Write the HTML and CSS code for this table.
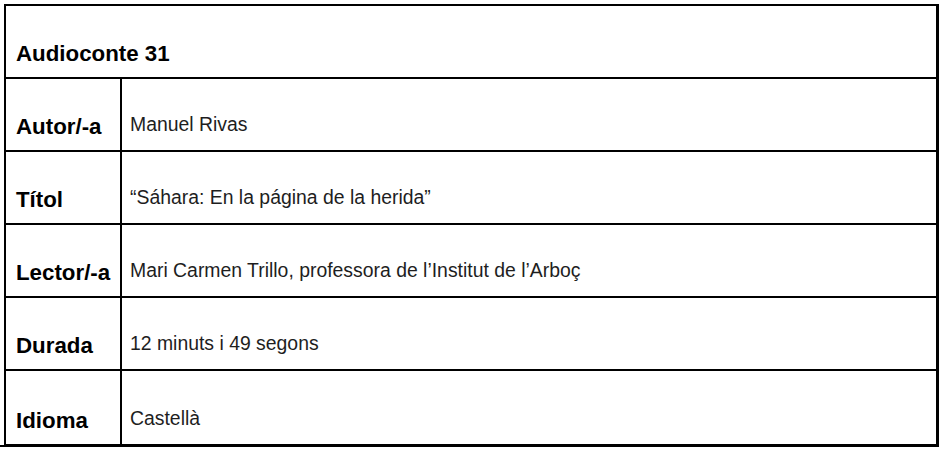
FILE: index.html
```html
<!DOCTYPE html>
<html lang="ca">
<head>
<meta charset="utf-8">
<title>Audioconte 31</title>
<link rel="stylesheet" href="styles.css">
</head>
<body>
<div class="sheet">
  <div class="row head"><div class="label">Audioconte 31</div></div>
  <div class="row"><div class="label">Autor/-a</div><div class="value">Manuel Rivas</div></div>
  <div class="row"><div class="label">Títol</div><div class="value">“Sáhara: En la página de la herida”</div></div>
  <div class="row"><div class="label">Lector/-a</div><div class="value">Mari Carmen Trillo, professora de l’Institut de l’Arboç</div></div>
  <div class="row"><div class="label">Durada</div><div class="value">12 minuts i 49 segons</div></div>
  <div class="row last"><div class="label">Idioma</div><div class="value">Castellà</div></div>
</div>
</body>
</html>
```
FILE: styles.css
```css
html, body {
  margin: 0;
  padding: 0;
  background: #fff;
}
body {
  padding: 4px 0 0 4px;
  font-family: "Liberation Sans", Arial, sans-serif;
}
.sheet {
  position: relative;
  width: 930px;
  border-top: 2px solid #000;
  border-left: 2px solid #000;
  border-right: 3px solid #000;
  border-bottom: 3px solid #000;
}
.sheet::after {
  content: "";
  position: absolute;
  left: -6px;
  bottom: -3px;
  width: 4px;
  height: 2px;
  background: #000;
}
.row {
  display: grid;
  grid-template-columns: 116px 1fr;
  height: 71px;
  border-bottom: 2px solid #000;
}
.row.head {
  grid-template-columns: 1fr;
}
.row.last {
  height: 73px;
  border-bottom: none;
}
.label {
  align-self: end;
  font-weight: bold;
  font-size: 22.3px;
  line-height: 1;
  color: #000;
  padding: 0 0 12px 10px;
}
.row .label {
  border-right: 2px solid #000;
  align-self: stretch;
  display: flex;
  align-items: flex-end;
}
.row.head .label {
  border-right: none;
}
.value {
  align-self: end;
  font-size: 19.4px;
  line-height: 1;
  color: #1e1e1e;
  padding: 0 0 16px 8px;
}
```
